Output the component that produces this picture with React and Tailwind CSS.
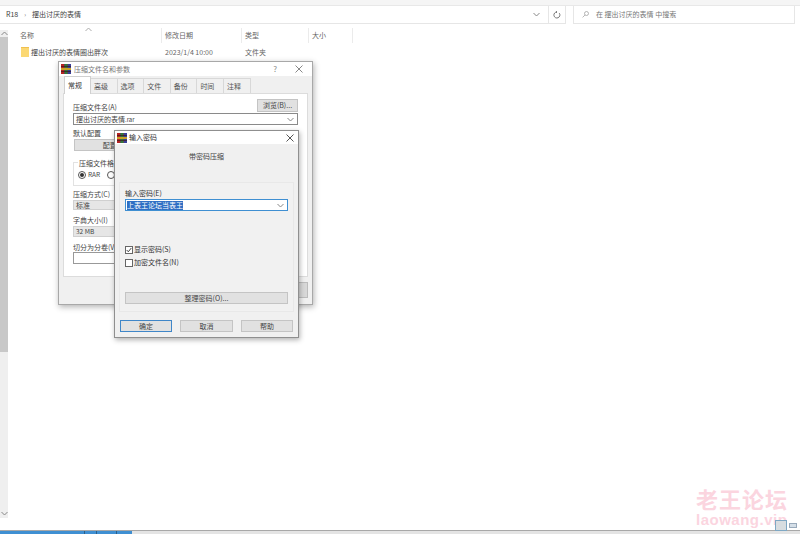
import React from "react";

const FONT = { fontFamily: '"Noto Sans CJK SC", "Liberation Sans", sans-serif' };

function RarIcon() {
  return (
    <svg width="10" height="10" viewBox="0 0 10 10" className="shrink-0">
      <rect width="10" height="10" fill="#7a2a5a" />
      <rect x="0" y="0" width="3" height="10" fill="#b52222" />
      <rect x="3.5" y="0" width="3" height="10" fill="#2f7a3a" />
      <rect x="7" y="0" width="3" height="10" fill="#3a3f9a" />
      <rect x="0" y="4" width="10" height="2" fill="#c9a227" />
      <rect x="0" y="2" width="10" height=".7" fill="#3a1a1a" />
      <rect x="0" y="7" width="10" height=".7" fill="#3a1a1a" />
    </svg>
  );
}

function Chevron({ className = "" }) {
  return (
    <svg width="7" height="5" viewBox="0 0 7 5" className={className}>
      <path d="M.5 1 3.5 4 6.5 1" fill="none" stroke="#888" strokeWidth="1" />
    </svg>
  );
}

function Close({ color = "#555" }) {
  return (
    <svg width="8" height="8" viewBox="0 0 8 8">
      <path d="M.5.5l7 7M7.5.5l-7 7" stroke={color} strokeWidth="1" />
    </svg>
  );
}

function Btn({ children, className = "" }) {
  return (
    <div className={`flex items-center justify-center bg-[#e1e1e1] border border-[#c4c4c4] text-[7px] text-[#444] ${className}`}>
      {children}
    </div>
  );
}

function Explorer() {
  return (
    <div className="w-[800px] h-[534px] bg-white flex flex-col overflow-hidden text-[7px] text-[#666]">
      <div className="h-[6px] bg-[#f5f5f5] border-b border-[#e8e8e8]" />
      <div className="flex h-[18px] pr-[5px]">
        <div className="w-[549px] border-b border-r border-[#e6e6e6] flex items-center pl-[6px] text-[#444]">
          <span>R18</span>
          <span className="mx-[6px] text-[#777] text-[6px]">›</span>
          <span>摆出讨厌的表情</span>
          <Chevron className="ml-auto mr-[8px]" />
        </div>
        <div className="w-[17px] border-b border-r border-[#e6e6e6] flex items-center justify-center">
          <svg width="8" height="8" viewBox="0 0 8 8">
            <path d="M6.3 2.2A3 3 0 1 1 4 1L3.2.2M4 1l-.8.8" fill="none" stroke="#666" strokeWidth=".9" />
          </svg>
        </div>
        <div className="flex-1 ml-[7px] border border-t-0 border-[#e6e6e6] flex items-center pl-[8px] text-[#777]">
          <svg width="7" height="7" viewBox="0 0 7 7" className="mr-[7px]">
            <circle cx="4.5" cy="2.5" r="2" fill="none" stroke="#999" strokeWidth=".7" />
            <path d="M3 4 .6 6.4" stroke="#999" strokeWidth=".7" />
          </svg>
          <span>在 摆出讨厌的表情 中搜索</span>
        </div>
      </div>
      <div className="flex flex-1 min-h-0">
        <div className="w-[8px] mt-[6px] mb-[12px] bg-[#efefef] flex flex-col">
          <div className="h-[7px] flex items-center justify-center">
            <Chevron className="rotate-180" />
          </div>
          <div className="h-[315px] bg-[#c8c8c8]" />
          <div className="mt-auto h-[9px] flex items-center justify-center">
            <Chevron />
          </div>
        </div>
        <div className="flex-1 pl-[12px]">
          <div className="flex h-[15px] mt-[4px] items-center relative">
            <div className="w-[142px] h-full flex items-center border-r border-[#ebebeb]">名称</div>
            <div className="absolute left-[65px] -top-[1px] flex">
              <Chevron className="rotate-180 opacity-70" />
            </div>
            <div className="w-[80px] pl-[3px] h-full flex items-center border-r border-[#ebebeb]">修改日期</div>
            <div className="w-[67px] pl-[3px] h-full flex items-center border-r border-[#ebebeb]">类型</div>
            <div className="w-[44px] pl-[3px] h-full flex items-center border-r border-[#ebebeb]">大小</div>
          </div>
          <div className="flex h-[14px] mt-[2px] items-center">
            <div className="w-[142px] flex items-center gap-[2px] text-[#444]">
              <svg width="8" height="10" viewBox="0 0 8 10" className="ml-[1px] shrink-0">
                <rect width="8" height="10" fill="#fbd873" />
                <rect width="8" height="1" fill="#f0c050" />
              </svg>
              <span className="whitespace-nowrap">摆出讨厌的表情圈出胖次</span>
            </div>
            <div className="w-[80px] pl-[3px]">2023/1/4 10:00</div>
            <div className="w-[67px] pl-[3px]">文件夹</div>
          </div>
        </div>
      </div>
      <div className="h-[4px] flex border-t border-[#a8a8a8]">
        <div className="w-[132px] bg-[#3f8fd2] flex">
          <div className="w-[85px] border-r border-[#2a5f8a]" />
          <div className="w-[12px] border-r border-[#2a5f8a]" />
          <div className="w-[20px] border-r border-[#2a5f8a]" />
        </div>
        <div className="flex-1 bg-[#e4e4e4]" />
      </div>
    </div>
  );
}

function ArchiveDialog() {
  return (
    <div className="absolute left-[58px] top-[61px] w-[255px] h-[244px] bg-[#f0f0f0] border border-[#a8a8a8] shadow-[1px_2px_6px_rgba(0,0,0,0.3)] text-[7px] text-[#444] flex flex-col">
      <div className="h-[14px] bg-white flex items-center pl-[2px] pr-[9px] shrink-0">
        <RarIcon />
        <span className="ml-[3px] text-[#777]">压缩文件名和参数</span>
        <span className="ml-auto mr-[18px] text-[#888] text-[8px]">?</span>
        <Close color="#888" />
      </div>
      <div className="flex h-[17px] ml-[5px] text-[#555] shrink-0">
        {["常规", "高级", "选项", "文件", "备份", "时间", "注释"].map((t, i) => (
          <div
            key={t}
            className={
              i === 0
                ? "w-[27px] h-[18px] bg-white border border-b-0 border-[#d0d0d0] flex items-center pl-[3px] text-[#333] z-10"
                : "w-[26.6px] mt-[2px] border-t border-r border-[#d8d8d8] flex items-center pl-[3px]"
            }
          >
            {t}
          </div>
        ))}
      </div>
      <div className="mx-[4px] h-[184px] bg-white border border-[#dcdcdc] pl-[9px] pr-[9px] pt-[5px] shrink-0">
        <div className="flex items-end justify-between h-[14px]">
          <span className="leading-[10px] mb-[1px]">压缩文件名(A)</span>
          <Btn className="w-[41px] h-[13px] mb-[1px]">浏览(B)...</Btn>
        </div>
        <div className="h-[12px] border border-[#8a8a8a] flex items-center pl-[2px] pr-[3px] bg-white">
          <span>摆出讨厌的表情<span className="text-[6px]">.rar</span></span>
          <Chevron className="ml-auto" />
        </div>
        <div className="mt-[3px] h-[10px] flex items-center">默认配置</div>
        <Btn className="w-[86px] h-[12px] mt-[1px] ml-[1px]">配置(F)...</Btn>
        <div className="mt-[11px] w-[110px] h-[24px] border border-[#e2e2e2] relative">
          <span className="absolute -top-[5px] left-[4px] bg-white px-[1px] whitespace-nowrap leading-[10px]">压缩文件格式</span>
          <div className="absolute left-[4px] top-[7px] flex items-center gap-[2px]">
            <div className="w-[8px] h-[8px] rounded-full border border-[#555] flex items-center justify-center">
              <div className="w-[4px] h-[4px] rounded-full bg-[#333]" />
            </div>
            <span className="text-[6.5px]">RAR</span>
            <div className="ml-[5px] w-[8px] h-[8px] rounded-full border border-[#555]" />
          </div>
        </div>
        <div className="mt-[3px] h-[10px] flex items-center">压缩方式(C)</div>
        <div className="mt-[1px] h-[10px] w-[100px] bg-[#e6e6e6] border border-[#d0d0d0] flex items-center pl-[2px]">标准</div>
        <div className="mt-[5px] h-[10px] flex items-center">字典大小(I)</div>
        <div className="mt-[1px] h-[11px] w-[100px] bg-[#e6e6e6] border border-[#d0d0d0] flex items-center pl-[2px] text-[6.5px]">32 MB</div>
        <div className="mt-[5px] h-[10px] flex items-center">切分为分卷(V)</div>
        <div className="h-[12px] w-[100px] bg-white border border-[#999]" />
      </div>
      <div className="flex justify-end pr-[4px] mt-[5px]">
        <div className="w-[30px] h-[16px] bg-[#d8d8d8] border border-[#bcbcbc]" />
      </div>
    </div>
  );
}

function PasswordDialog() {
  return (
    <div className="absolute left-[114px] top-[130px] w-[185px] h-[208px] bg-[#f0f0f0] border border-[#8f8f8f] shadow-[1px_2px_5px_rgba(0,0,0,0.3)] text-[7px] text-[#333] flex flex-col">
      <div className="h-[13px] bg-white flex items-center pl-[2px] pr-[4px] shrink-0">
        <RarIcon />
        <span className="ml-[2px]">输入密码</span>
        <span className="ml-auto flex"><Close /></span>
      </div>
      <div className="h-[38px] flex items-start justify-center pt-[7px] shrink-0 text-[#444]">带密码压缩</div>
      <div className="mx-[4px] h-[130px] border border-[#e8e8e8] bg-[#f1f1f1] px-[5px] pt-[5px] flex flex-col shrink-0">
        <div className="h-[10px] flex items-center">输入密码(E)</div>
        <div className="h-[12px] mt-[1px] border border-[#3f8fd2] bg-white flex items-center pl-[1px] pr-[3px]">
          <span className="bg-[#2f6fc4] text-white leading-[9px]">上表王论坛当表王</span>
          <Chevron className="ml-auto" />
        </div>
        <div className="mt-[34px] flex flex-col gap-[4px]">
          <div className="flex items-center gap-[1px] h-[9px]">
            <div className="w-[8px] h-[8px] border border-[#666] bg-white flex items-center justify-center">
              <svg width="6" height="6" viewBox="0 0 6 6">
                <path d="M.7 3l1.6 1.8L5.3 1" fill="none" stroke="#333" strokeWidth=".9" />
              </svg>
            </div>
            <span>显示密码(S)</span>
          </div>
          <div className="flex items-center gap-[1px] h-[9px]">
            <div className="w-[8px] h-[8px] border border-[#666] bg-white" />
            <span>加密文件名(N)</span>
          </div>
        </div>
        <Btn className="h-[12px] mt-[25px]">整理密码(O)...</Btn>
      </div>
      <div className="flex justify-between pl-[5px] pr-[5px] mt-[8px]">
        <Btn className="w-[52px] h-[12px] !border-[#3f86c8] border-[1.5px]">确定</Btn>
        <Btn className="w-[53px] h-[12px]">取消</Btn>
        <Btn className="w-[52px] h-[12px]">帮助</Btn>
      </div>
    </div>
  );
}

function Watermark() {
  return (
    <div className="absolute left-[696px] bottom-[4px] flex flex-col items-start text-[#fbd5df] pointer-events-none">
      <div className="text-[22px] font-bold leading-[24px] tracking-[1px] whitespace-nowrap">老王论坛</div>
      <div className="text-[15px] font-bold leading-[20px] tracking-[0.5px] whitespace-nowrap" style={{ fontFamily: '"Liberation Sans", sans-serif' }}>laowang.vip</div>
    </div>
  );
}

export default function App() {
  return (
    <div className="relative w-[800px] h-[534px] overflow-hidden" style={FONT}>
      <Explorer />
      <ArchiveDialog />
      <PasswordDialog />
      <Watermark />
      <div className="absolute left-[775px] top-[520px] flex items-center gap-[2px]">
        <div className="w-[12px] h-[11px] bg-[#d8dde0] border border-[#7fa8c4]" />
        <div className="w-[8px] h-[5px] bg-[#d5dfe8] border border-[#9ab]" />
      </div>
    </div>
  );
}
